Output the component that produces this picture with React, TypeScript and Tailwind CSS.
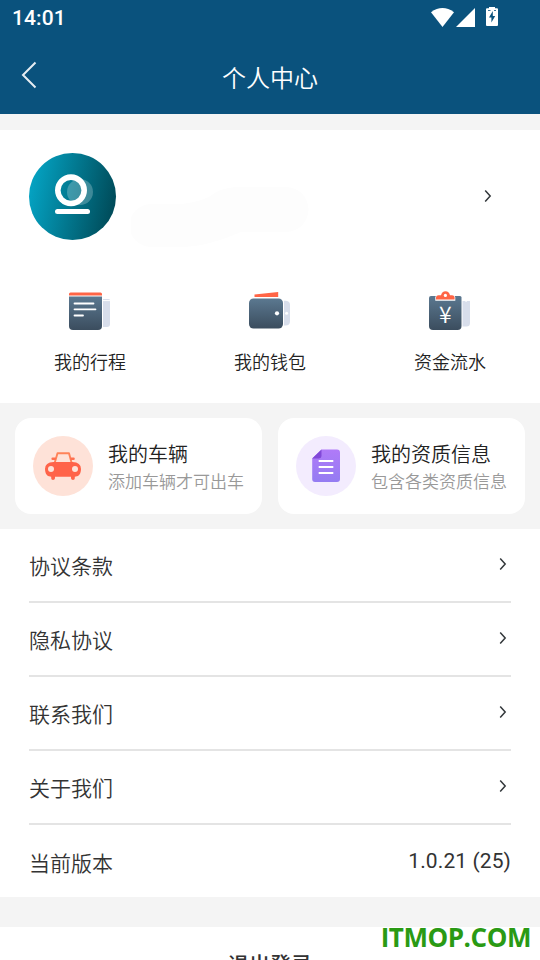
import React from 'react';

const menuItems = [
  { id: 1, name: '协议条款' },
  { id: 2, name: '隐私协议' },
  { id: 3, name: '联系我们' },
  { id: 4, name: '关于我们' },
];

const Chevron = () => (
  <svg className="mb-[2px]" width="8" height="14" viewBox="0 0 8 14" fill="none">
    <path d="M1.2 1.4 L6.2 7 L1.2 12.6" stroke="#33383b" strokeWidth="1.5" />
  </svg>
);

const StatusIcons = () => (
  <svg className="mb-[2px]" width="70" height="22" viewBox="430 6 70 22" fill="#fff">
    <path d="M431 12.2 Q442.5 4 454 12.2 L442.5 27 Z" />
    <path d="M475 8 V27 H456 Z" />
    <path d="M489 7 H495 V8.2 H497 Q498 8.2 498 9.2 V25 Q498 26 497 26 H487 Q486 26 486 25 V9.2 Q486 8.2 487 8.2 H489 Z" />
    <path d="M492.8 11 L489 17.6 H491.4 V22.6 L495.2 16 H492.8 Z" fill="#0a527d" />
    <path d="M488 10.5 H490.5 M494 10.5 H496" stroke="#0a527d" strokeWidth="0.8" />
  </svg>
);

const Avatar = () => (
  <svg width="88" height="88" viewBox="0 0 88 88">
    <defs>
      <linearGradient id="avatar" x1="0" y1="0.4" x2="1" y2="0.6">
        <stop offset="0" stopColor="#04a3c3" />
        <stop offset="1" stopColor="#004a58" />
      </linearGradient>
    </defs>
    <circle cx="43.5" cy="43.5" r="43.5" fill="url(#avatar)" />
    <circle cx="51" cy="39" r="13" fill="#fff" fillOpacity="0.24" />
    <circle cx="42" cy="37.3" r="13.2" fill="none" stroke="#fff" strokeWidth="5.6" />
    <rect x="26" y="56" width="35" height="5" rx="2.5" fill="#fff" />
  </svg>
);

// faint placeholder where the user name goes
const NameBlob = () => (
  <svg width="180" height="62" viewBox="0 0 180 62">
    <path d="M20 17 H50 Q75 14 85 5 Q95 0 110 0 H155 A22 22 0 0 1 155 45 H110 Q75 60 50 60 H20 A21 21 0 0 1 20 17 Z" fill="#fdfdfd" />
  </svg>
);

const DarkGradient = ({ id }: { id: string }) => (
  <defs>
    <linearGradient id={id} x1="0" y1="0" x2="0" y2="1">
      <stop offset="0" stopColor="#5b7890" />
      <stop offset="1" stopColor="#3b4d5e" />
    </linearGradient>
  </defs>
);

const TripIcon = () => (
  <svg width="42" height="40" viewBox="0 0 42 40">
    <DarkGradient id="trip" />
    <path d="M34 7 H39 Q41 7 41 8 V32 Q41 35 38 35 H34 Z" fill="#d8deeb" />
    <path d="M34 8.6 H41" stroke="#fff" strokeWidth="1" />
    <path d="M0 4.6 H33 V34 Q33 38 29 38 H4 Q0 38 0 34 Z" fill="url(#trip)" />
    <path d="M1.5 0.5 H31.5 Q33 0.5 33 2 V3.5 H0 V2 Q0 0.5 1.5 0.5 Z" fill="#ff6546" />
    <path d="M5.5 11.5 H24.5 M5.5 17.3 H26.5 M5.5 23.5 H14" stroke="#fff" strokeWidth="1.8" strokeLinecap="round" />
  </svg>
);

const WalletIcon = () => (
  <svg width="42" height="40" viewBox="0 0 42 40">
    <DarkGradient id="wallet" />
    <path d="M35 8.7 H37 Q41 9 41 13 V29 Q41 33.5 36.5 33.5 H35 Z" fill="#d8deeb" />
    <path d="M5.5 2.5 L29.2 0 V5 H5.5 Z" fill="#ff6546" />
    <rect x="0" y="6.5" width="34" height="30" rx="4.5" fill="url(#wallet)" />
    <circle cx="28" cy="21.3" r="2.1" fill="#fff" />
    <circle cx="37.6" cy="21.3" r="1.5" fill="#fff" />
  </svg>
);

const FundsIcon = () => (
  <svg className="overflow-visible" width="42" height="40" viewBox="0 0 42 40">
    <DarkGradient id="funds" />
    <path d="M33.5 9 H36 L37 10 L38.3 9 H41 V31 Q41 34.5 37.5 34.5 H33.5 Z" fill="#d8deeb" />
    <path d="M2 4 H31 Q32.5 4 32.5 5.5 V34 Q32.5 38 28.5 38 H4 Q0 38 0 34 V6 Q0 4 2 4 Z" fill="url(#funds)" />
    <path d="M6.3 8.7 V5.5 Q6.3 3.5 8.3 3.5 H24.3 Q26.3 3.5 26.3 5.5 V8.7 Z" fill="#fff" />
    <path d="M7 7.6 V5.8 Q7 3.3 9.5 3.3 H12 Q13 -0.8 16.5 -0.8 Q20 -0.8 21 3.3 H23 Q25.6 3.3 25.6 5.8 V7.6 Z" fill="#ff6546" />
    <circle cx="16.4" cy="3.4" r="1.6" fill="#fff" />
    <text x="16.3" y="31" fontSize="23" fontWeight="350" textAnchor="middle" fill="#fff" fontFamily="Noto Sans CJK SC, sans-serif">¥</text>
  </svg>
);

const CarIcon = () => (
  <svg width="60" height="60" viewBox="0 0 60 60">
    <circle cx="30" cy="30" r="30" fill="#fee2d8" />
    <path d="M21.8 26.5 L24.5 17.3 H36 L38.5 26.5" fill="none" stroke="#ff8358" strokeWidth="1.9" strokeLinejoin="round" />
    <path d="M19.6 22.8 H22 M38.4 22.8 H40.6" stroke="#ff7050" strokeWidth="2.4" strokeLinecap="round" />
    <path d="M20.5 26 H39.5 Q48 26.3 48 33 Q48 38 45 40 L41.8 40.7 V42.3 Q41.8 44 40 44 Q38.2 44 38 42.3 V40.7 H22 V42.3 Q21.8 44 20 44 Q18.2 44 18.2 42.3 V40.7 L15 40 Q12 38 12 33 Q12 26.3 20.5 26 Z" fill="#ff6349" />
    <circle cx="18" cy="33" r="3" fill="#fee2d8" />
    <circle cx="42" cy="33" r="3" fill="#fee2d8" />
  </svg>
);

const DocumentIcon = () => (
  <svg width="60" height="60" viewBox="0 0 60 60">
    <defs>
      <linearGradient id="doc" x1="0" y1="0" x2="0" y2="1">
        <stop offset="0" stopColor="#b07af8" />
        <stop offset="1" stopColor="#947cf2" />
      </linearGradient>
    </defs>
    <circle cx="30" cy="30" r="30" fill="#f3ecfe" />
    <path d="M25.5 13.5 H41 Q44 13.5 44 16.5 V43 Q44 46 41 46 H19 Q16.2 46 16.2 43 V22.5 Z" fill="url(#doc)" />
    <path d="M25.5 13.5 V19.5 Q25.5 22.5 22.5 22.5 H16.2 Z" fill="#8148d8" />
    <path d="M22.7 25 H37.3 M22.7 31 H37.3 M22.7 37 H37.3" stroke="#fff" strokeWidth="1.8" />
  </svg>
);

const shortcuts = [
  { id: 1, name: '我的行程', icon: <TripIcon /> },
  { id: 2, name: '我的钱包', icon: <WalletIcon /> },
  { id: 3, name: '资金流水', icon: <FundsIcon /> },
];

const cards = [
  { id: 1, title: '我的车辆', desc: '添加车辆才可出车', icon: <CarIcon /> },
  { id: 2, title: '我的资质信息', desc: '包含各类资质信息', icon: <DocumentIcon /> },
];

const App = () => {
  return (
    <div className="relative flex h-[960px] w-[540px] flex-col overflow-hidden bg-[#f4f4f4] font-['Roboto','Noto_Sans_CJK_SC',sans-serif] font-[350] text-[#333]">
      <header className="h-[114px] shrink-0 bg-[#0a527d] text-white">
        <div className="flex h-9 items-center justify-between pl-3 pr-10">
          <span className="pt-[2px] text-[21px] font-medium tracking-[0.1px]">14:01</span>
          <StatusIcons />
        </div>
        <div className="grid h-[78px] grid-cols-[60px_1fr_60px] items-center">
          <svg className="ml-5" width="18" height="28" viewBox="0 0 18 28" fill="none">
            <path d="M15.5 1.5 L3 14 L15.5 26.5" stroke="#e6edf2" strokeWidth="2" />
          </svg>
          <h1 className="pt-2 text-center text-2xl font-[350]">个人中心</h1>
        </div>
      </header>

      <section className="mt-4 h-[273px] shrink-0 bg-white">
        <div className="flex h-[133px] items-center pl-[29px] pr-12">
          <Avatar />
          <div className="ml-[14px] mt-[42px] flex-1">
            <NameBlob />
          </div>
          <Chevron />
        </div>
        <div className="grid grid-cols-3 pt-[29px]">
          {shortcuts.map(item => (
            <div key={item.id} className="flex flex-col items-center">
              {item.icon}
              <span className="mt-[17px] text-lg leading-7 text-[#222]">{item.name}</span>
            </div>
          ))}
        </div>
      </section>

      <section className="grid h-[126px] shrink-0 grid-cols-2 gap-4 px-[15px] pb-[15px] pt-[15px]">
        {cards.map(card => (
          <div key={card.id} className="flex items-center rounded-2xl bg-white pl-[18px]">
            {card.icon}
            <div className="ml-[15px] whitespace-nowrap pt-[5px]">
              <div className="text-xl leading-7 text-[#222]">{card.title}</div>
              <div className="text-[17px] leading-[27px] text-[#999]">{card.desc}</div>
            </div>
          </div>
        ))}
      </section>

      <section className="h-[368px] shrink-0 bg-white px-[29px] text-[21px]">
        {menuItems.map(item => (
          <div key={item.id} className="flex h-[74px] items-center justify-between border-b-2 border-[#e4e4e4] pr-1">
            <span className="pt-[6px]">{item.name}</span>
            <Chevron />
          </div>
        ))}
        <div className="flex h-[72px] items-center justify-between">
          <span className="pt-[7px]">当前版本</span>
          <span className="pt-[2px] font-normal tracking-[0.1px]">1.0.21 (25)</span>
        </div>
      </section>

      <button className="mt-[30px] h-[77px] w-full shrink-0 bg-white text-[21px] font-medium leading-[77px]">退出登录</button>

      {/* watermark */}
      <div className="absolute bottom-[5px] right-[9px] font-['Open_Sans',sans-serif] text-[26px] font-bold leading-9 tracking-[-0.45px] text-[#2a9a14]">ITMOP.COM</div>
    </div>
  );
};

export default App;
